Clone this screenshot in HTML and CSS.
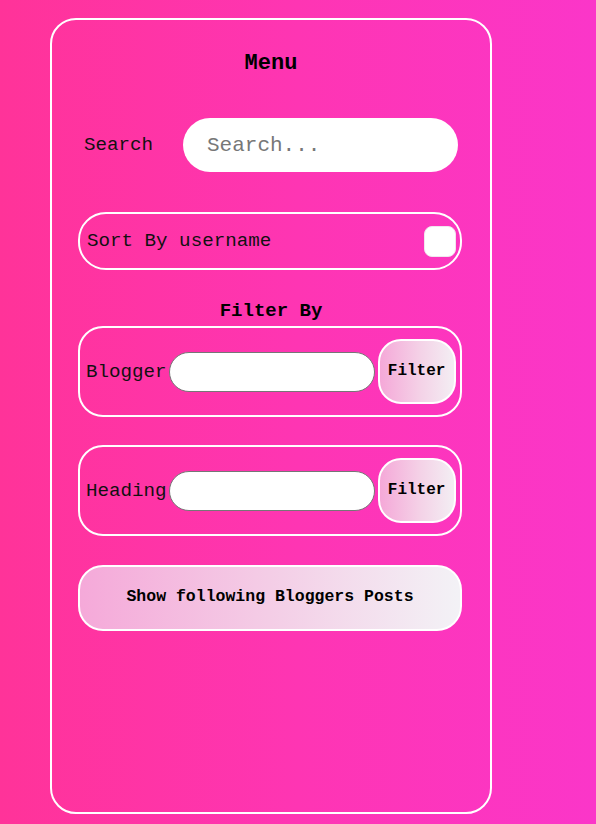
FILE: index.html
```html
<!DOCTYPE html>
<html>
<head>
<meta charset="utf-8">
<link rel="stylesheet" href="styles.css">
</head>
<body>
<div class="card">
  <h2 class="title">Menu</h2>
  <div class="search-row">
    <label class="label search-label">Search</label>
    <input class="search-input" type="text" placeholder="Search...">
  </div>
  <div class="sort-box">
    <span class="label">Sort By username</span>
    <span class="checkbox"></span>
  </div>
  <h3 class="subtitle">Filter By</h3>
  <div class="filter-box">
    <span class="label">Blogger</span>
    <input class="filter-input" type="text">
    <button class="filter-btn">Filter</button>
  </div>
  <div class="filter-box second">
    <span class="label">Heading</span>
    <input class="filter-input" type="text">
    <button class="filter-btn">Filter</button>
  </div>
  <button class="show-btn">Show following Bloggers Posts</button>
</div>
</body>
</html>
```
FILE: styles.css
```css
html, body {
  margin: 0;
  padding: 0;
  height: 100%;
}
body {
  background: linear-gradient(90deg, #ff3399 0%, #fe35b3 50%, #fb36c9 100%);
  font-family: "Courier New", "Nimbus Mono PS", "FreeMono", "Liberation Mono", monospace;
  color: #000;
  overflow: hidden;
}
.card {
  box-sizing: border-box;
  margin: 18px 0 0 50px;
  width: 442px;
  height: 796px;
  border: 2px solid #fff;
  border-radius: 26px;
  padding: 0 0 0 26px;
  display: flex;
  flex-direction: column;
}
.title {
  margin: 31px 0 0 0;
  width: 386px;
  text-align: center;
  font-size: 22px;
  line-height: 26px;
  font-weight: bold;
}
.label {
  font-size: 19.2px;
  line-height: 22px;
  white-space: nowrap;
  color: #111;
}
.search-row {
  margin-top: 41px;
  width: 384px;
  height: 54px;
  display: flex;
  align-items: center;
  padding-left: 6px;
  box-sizing: border-box;
}
.search-label {
  flex: 1;
}
.search-input {
  box-sizing: border-box;
  width: 275px;
  height: 54px;
  margin-right: 4px;
  border: none;
  border-radius: 27px;
  background: #fff;
  padding: 0 0 0 24px;
  font-family: "Courier New", "Nimbus Mono PS", "FreeMono", "Liberation Mono", monospace;
  font-size: 21px;
  outline: none;
}
.search-input::placeholder {
  color: #777;
}
.sort-box {
  box-sizing: border-box;
  margin-top: 40px;
  width: 384px;
  height: 58px;
  border: 2px solid #fff;
  border-radius: 28px;
  display: flex;
  align-items: center;
  justify-content: space-between;
  padding: 0 4px 0 7px;
}
.checkbox {
  width: 32px;
  height: 31px;
  background: #fff;
  border-radius: 8px;
  box-sizing: border-box;
  border: 1px solid #f0e6ee;
}
.subtitle {
  margin: 30px 0 0 0;
  width: 386px;
  text-align: center;
  font-size: 19px;
  line-height: 22px;
  font-weight: bold;
}
.filter-box {
  box-sizing: border-box;
  margin-top: 4px;
  width: 384px;
  height: 91px;
  border: 2px solid #fff;
  border-radius: 25px;
  display: flex;
  align-items: center;
  padding: 0 4px 0 6px;
}
.filter-box.second {
  margin-top: 28px;
}
.filter-input {
  box-sizing: border-box;
  width: 206px;
  height: 40px;
  margin-left: 2px;
  border: 1px solid #767676;
  border-radius: 20px;
  background: #fff;
  outline: none;
}
.filter-btn {
  box-sizing: border-box;
  margin-left: 3px;
  width: 78px;
  height: 65px;
  border: 2px solid #fff;
  border-radius: 23px;
  background: linear-gradient(90deg, #f5a8d8 0%, #f4d2e7 55%, #f3eef3 100%);
  font-family: "Courier New", "Nimbus Mono PS", "FreeMono", "Liberation Mono", monospace;
  font-weight: bold;
  font-size: 16px;
  color: #000;
  padding: 0 0 2px 0;
}
.show-btn {
  box-sizing: border-box;
  margin-top: 29px;
  width: 384px;
  height: 66px;
  border: 2px solid #fff;
  border-radius: 25px;
  background: linear-gradient(90deg, #f5a9d9 0%, #f4cde6 50%, #f3f2f6 100%);
  font-family: "Courier New", "Nimbus Mono PS", "FreeMono", "Liberation Mono", monospace;
  font-weight: bold;
  font-size: 16.5px;
  color: #000;
  padding: 0 0 4px 0;
}
```
